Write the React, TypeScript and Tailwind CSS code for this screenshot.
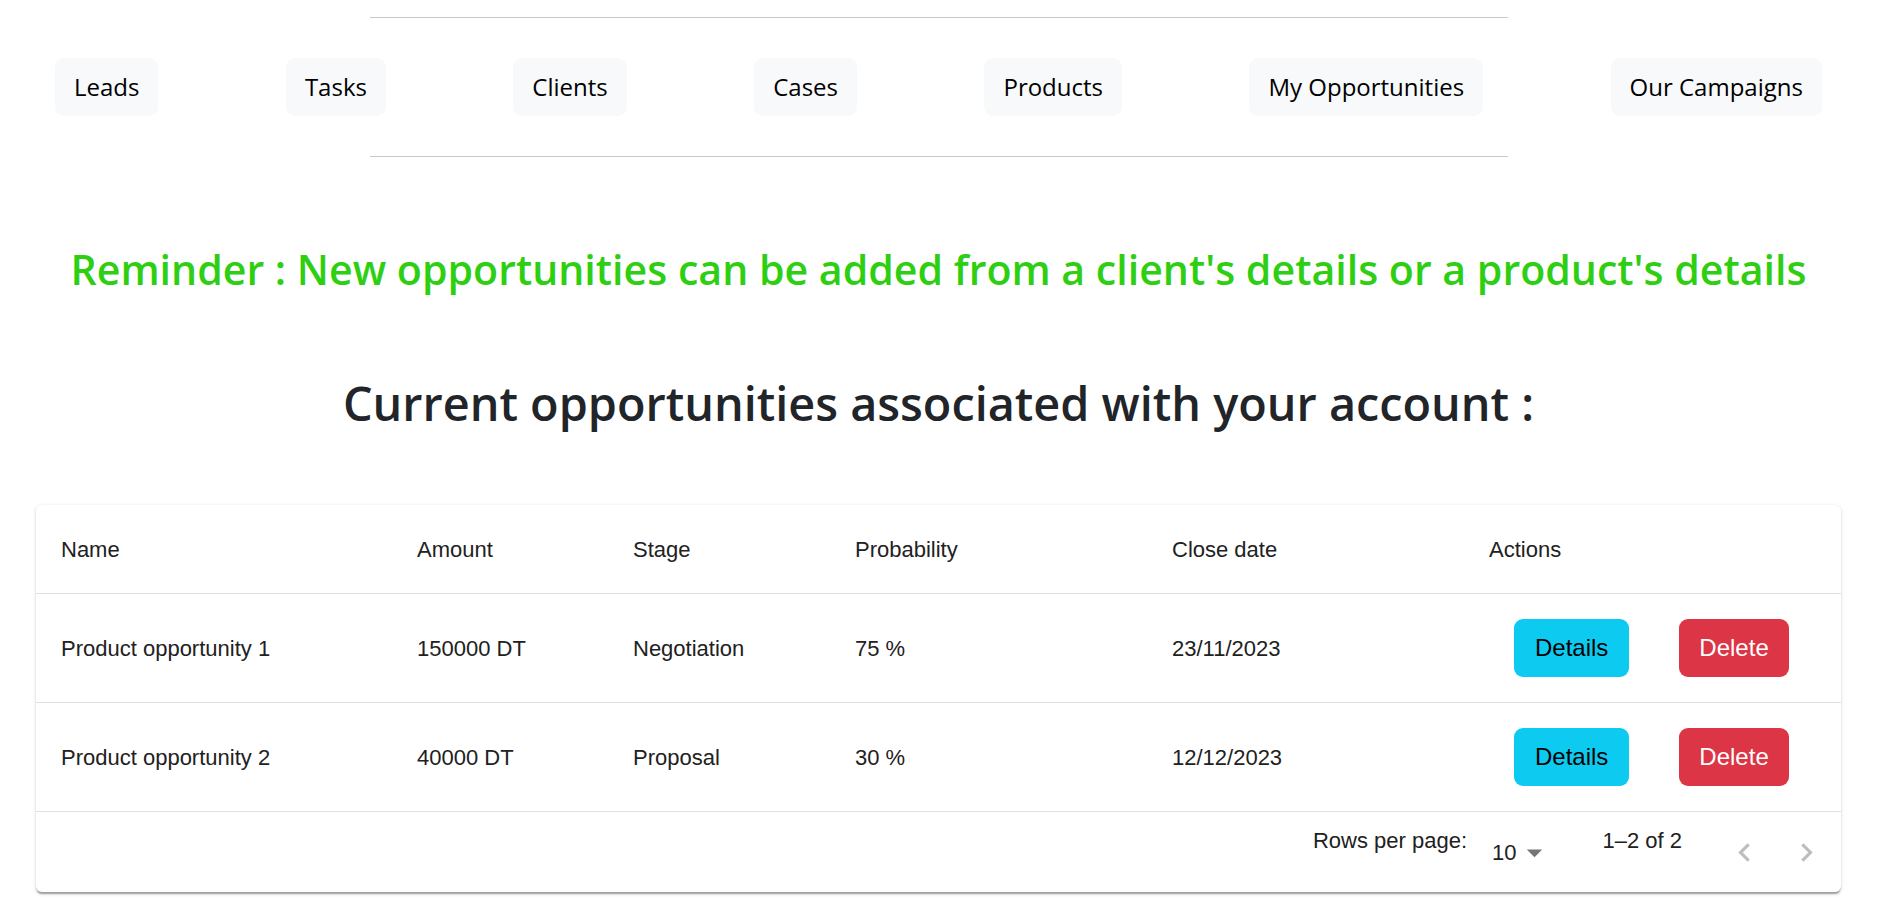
import React from "react";

const navItems = [
  "Leads",
  "Tasks",
  "Clients",
  "Cases",
  "Products",
  "My Opportunities",
  "Our Campaigns",
];

const rows = [
  {
    name: "Product opportunity 1",
    amount: "150000 DT",
    stage: "Negotiation",
    probability: "75 %",
    closeDate: "23/11/2023",
  },
  {
    name: "Product opportunity 2",
    amount: "40000 DT",
    stage: "Proposal",
    probability: "30 %",
    closeDate: "12/12/2023",
  },
];

function ChevronLeft() {
  return (
    <svg viewBox="0 0 24 24" className="w-[37px] h-[37px]" fill="#bdbdbd">
      <path d="M15.41 7.41 14 6l-6 6 6 6 1.41-1.41L10.83 12z" />
    </svg>
  );
}

function ChevronRight() {
  return (
    <svg viewBox="0 0 24 24" className="w-[37px] h-[37px]" fill="#bdbdbd">
      <path d="M10 6 8.59 7.41 13.17 12l-4.58 4.59L10 18l6-6z" />
    </svg>
  );
}

function ArrowDrop() {
  return (
    <svg viewBox="0 0 24 24" className="w-[37px] h-[37px]" fill="#757575">
      <path d="M7 10l5 5 5-5z" />
    </svg>
  );
}

export default function App() {
  return (
    <div className="min-h-screen bg-white pt-[17px] font-['Open_Sans',sans-serif] text-[#212529]">
      <div className="mx-auto w-[1138px] border-t-[1.5px] border-[#c8c9ca]" />
      <nav className="flex items-center justify-between px-[55px] pt-[40px] pb-[40px]">
        {navItems.map((item) => (
          <button
            key={item}
            className="h-[58px] rounded-[9px] bg-[#f8f9fa] px-[19px] text-[24px] text-black"
          >
            {item}
          </button>
        ))}
      </nav>
      <div className="mx-auto w-[1138px] border-t-[1.5px] border-[#c8c9ca]" />

      <h3 className="mt-[88px] text-center text-[41.1px] font-semibold leading-[1.2] text-[#2ecf12]">
        Reminder : New opportunities can be added from a client's details or a
        product's details
      </h3>

      <h2 className="mt-[81px] text-center text-[46.8px] font-semibold leading-[1.2] text-[#212529]">
        Current opportunities associated with your account :
      </h2>

      <div className="mx-[36px] mt-[74px] rounded-[6px] bg-white shadow-[0px_3px_1.5px_-1.5px_rgba(0,0,0,0.2),0px_1.5px_1.5px_0px_rgba(0,0,0,0.14),0px_1.5px_4.5px_0px_rgba(0,0,0,0.12)] font-['Liberation_Sans',Arial,sans-serif] text-[22px] text-[#212121]">
        <table className="w-full table-fixed border-collapse">
          <thead>
            <tr className="border-b border-[#e0e0e0] text-left">
              <th className="w-[356px] px-[25px] pt-[27px] pb-[25px] font-normal leading-[36px]">Name</th>
              <th className="w-[216px] px-[25px] pt-[27px] pb-[25px] font-normal leading-[36px]">Amount</th>
              <th className="w-[222px] px-[25px] pt-[27px] pb-[25px] font-normal leading-[36px]">Stage</th>
              <th className="w-[317px] px-[25px] pt-[27px] pb-[25px] font-normal leading-[36px]">Probability</th>
              <th className="w-[317px] px-[25px] pt-[27px] pb-[25px] font-normal leading-[36px]">Close date</th>
              <th className="px-[25px] pt-[27px] pb-[25px] font-normal leading-[36px]">Actions</th>
            </tr>
          </thead>
          <tbody>
            {rows.map((r) => (
              <tr key={r.name} className="border-b border-[#e0e0e0]">
                <td className="px-[25px] py-[25px]">{r.name}</td>
                <td className="px-[25px] py-[25px]">{r.amount}</td>
                <td className="px-[25px] py-[25px]">{r.stage}</td>
                <td className="px-[25px] py-[25px]">{r.probability}</td>
                <td className="px-[25px] py-[25px]">{r.closeDate}</td>
                <td className="px-[25px] py-[25px]">
                  <div className="flex items-center">
                    <button className="mx-[25px] h-[58px] rounded-[9px] bg-[#0dcaf0] px-[21px] text-[24px] text-black">
                      Details
                    </button>
                    <button className="mx-[25px] h-[58px] rounded-[9px] bg-[#dc3545] px-[20px] text-[24px] text-white">
                      Delete
                    </button>
                  </div>
                </td>
              </tr>
            ))}
          </tbody>
        </table>
        <div className="flex h-[80px] items-center justify-end pr-[4px]">
          <span className="mb-[24px]">Rows per page:</span>
          <div className="ml-[12px] mr-[49px] flex items-center pl-[13px]">
            <span>10</span>
            <ArrowDrop />
          </div>
          <span className="mb-[24px]">1–2 of 2</span>
          <div className="ml-[31px] flex items-center">
            <span className="flex w-[62px] justify-center">
              <ChevronLeft />
            </span>
            <span className="flex w-[62px] justify-center">
              <ChevronRight />
            </span>
          </div>
        </div>
      </div>
    </div>
  );
}
